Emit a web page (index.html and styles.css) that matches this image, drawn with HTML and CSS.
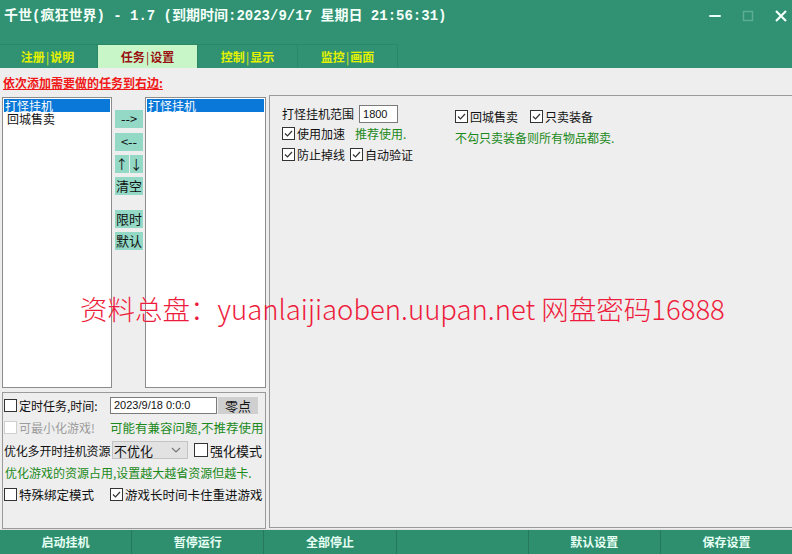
FILE: index.html
```html
<!DOCTYPE html>
<html lang="zh-CN">
<head>
    <meta charset="UTF-8">
    <title>千世(疯狂世界)</title>
    <link rel="stylesheet" href="styles.css">
</head>
<body>
    <div class="window">
        <div class="header">
            <div class="titlebar">
                <span class="title">千世(疯狂世界) - 1.7 (到期时间:2023/9/17 星期日 21:56:31)</span>
                <div class="win-btns">
                    <svg class="win-min" width="14" height="14" viewBox="0 0 14 14"><rect x="1" y="6" width="12" height="2" rx="1" fill="#eafff6"/></svg>
                    <svg class="win-max" width="14" height="14" viewBox="0 0 14 14"><rect x="2.5" y="2.5" width="9" height="9" fill="none" stroke="#5fae92" stroke-width="1.4"/></svg>
                    <svg class="win-close" width="14" height="14" viewBox="0 0 14 14"><path d="M2 2L12 12M12 2L2 12" stroke="#f4fffa" stroke-width="2.2"/></svg>
                </div>
            </div>
            <div class="tabs">
                <div class="tab">注册<i>|</i>说明</div>
                <div class="tab active">任务<i>|</i>设置</div>
                <div class="tab">控制<i>|</i>显示</div>
                <div class="tab">监控<i>|</i>画面</div>
            </div>
        </div>

        <div class="main">
            <div class="left">
                <div class="hint">依次添加需要做的任务到右边:</div>
                <div class="lists">
                    <div class="listbox list-src">
                        <div class="item sel">打怪挂机</div>
                        <div class="item">回城售卖</div>
                    </div>
                    <div class="move-btns">
                        <div class="mbtn b-add">--&gt;</div>
                        <div class="mbtn">&lt;--</div>
                        <div class="mbtn split"><span>↑</span><span>↓</span></div>
                        <div class="mbtn">清空</div>
                        <div class="mbtn b-limit">限时</div>
                        <div class="mbtn">默认</div>
                    </div>
                    <div class="listbox list-dst">
                        <div class="item sel">打怪挂机</div>
                    </div>
                </div>

                <div class="options">
                    <div class="orow r1">
                        <label class="ocell"><span class="cb"></span>定时任务,时间:</label>
                        <span class="field f-time">2023/9/18 0:0:0</span>
                        <span class="gbtn">零点</span>
                    </div>
                    <div class="orow r2">
                        <label class="ocell off"><span class="cb"></span>可最小化游戏!</label>
                        <span class="green">可能有兼容问题,不推荐使用</span>
                    </div>
                    <div class="orow r3">
                        <span class="olabel">优化多开时挂机资源</span>
                        <span class="select">不优化<svg width="10" height="6" viewBox="0 0 10 6"><path d="M1 1l4 4 4-4" fill="none" stroke="#777" stroke-width="1.2"/></svg></span>
                        <label class="strong-mode"><span class="cb"></span>强化模式</label>
                    </div>
                    <div class="orow r4">
                        <span class="green">优化游戏的资源占用,设置越大越省资源但越卡.</span>
                    </div>
                    <div class="orow r5">
                        <label class="ocell"><span class="cb"></span>特殊绑定模式</label>
                        <label><span class="cb on"><svg viewBox="0 0 11 11"><path d="M2 5.5l2.5 2.5 4.5-5" fill="none" stroke="#333" stroke-width="1.2"/></svg></span>游戏长时间卡住重进游戏</label>
                    </div>
                </div>
            </div>

            <div class="panel">
                <div class="pcol pcol-1">
                    <div class="prow">
                        <span>打怪挂机范围</span>
                        <span class="field f-range">1800</span>
                    </div>
                    <div class="prow">
                        <label><span class="cb on"><svg viewBox="0 0 11 11"><path d="M2 5.5l2.5 2.5 4.5-5" fill="none" stroke="#333" stroke-width="1.2"/></svg></span>使用加速</label>
                        <span class="green rec">推荐使用.</span>
                    </div>
                    <div class="prow">
                        <label><span class="cb on"><svg viewBox="0 0 11 11"><path d="M2 5.5l2.5 2.5 4.5-5" fill="none" stroke="#333" stroke-width="1.2"/></svg></span>防止掉线</label>
                        <label class="gap"><span class="cb on"><svg viewBox="0 0 11 11"><path d="M2 5.5l2.5 2.5 4.5-5" fill="none" stroke="#333" stroke-width="1.2"/></svg></span>自动验证</label>
                    </div>
                </div>
                <div class="pcol pcol-2">
                    <div class="prow">
                        <label><span class="cb on"><svg viewBox="0 0 11 11"><path d="M2 5.5l2.5 2.5 4.5-5" fill="none" stroke="#333" stroke-width="1.2"/></svg></span>回城售卖</label>
                        <label class="gap2"><span class="cb on"><svg viewBox="0 0 11 11"><path d="M2 5.5l2.5 2.5 4.5-5" fill="none" stroke="#333" stroke-width="1.2"/></svg></span>只卖装备</label>
                    </div>
                    <div class="prow">
                        <span class="green">不勾只卖装备则所有物品都卖.</span>
                    </div>
                </div>
            </div>

            <div class="watermark">资料总盘：yuanlaijiaoben.uupan.net 网盘密码16888</div>
        </div>

        <div class="footer">
            <div class="fbtn">启动挂机</div>
            <div class="fbtn">暂停运行</div>
            <div class="fbtn">全部停止</div>
            <div class="fbtn"></div>
            <div class="fbtn">默认设置</div>
            <div class="fbtn">保存设置</div>
        </div>
    </div>
</body>
</html>
```

FILE: styles.css
```css
body {
    margin: 0;
    padding: 0;
    background: #eeeeee;
    font-family: "Noto Sans CJK SC", "Noto Sans", sans-serif;
    font-size: 12px;
    color: #111;
}
.window {
    width: 792px;
    height: 554px;
    display: flex;
    flex-direction: column;
    overflow: hidden;
}

/* header: title row + tab strip */
.header {
    background: #309273;
    height: 68px;
    flex: none;
}
.titlebar {
    height: 44px;
    display: flex;
    align-items: flex-start;
}
.title {
    margin: 6px 0 0 4px;
    line-height: 20px;
    font-family: "Liberation Mono", "Noto Sans CJK SC", monospace;
    font-size: 14px;
    font-weight: bold;
    color: #f4fff9;
}
.win-btns {
    margin-left: auto;
    display: flex;
    gap: 19px;
    padding: 9px 4px 0 0;
}
.tabs {
    display: flex;
    height: 24px;
    width: 400px;
    margin-left: -2px;
    border-top: 1px solid #2a8868;
    box-sizing: border-box;
}
.tab {
    width: 100px;
    text-align: center;
    line-height: 23px;
    font-weight: bold;
    color: #e4f200;
    border-right: 1px solid #2a8868;
    box-sizing: border-box;
}
.tab i {
    font-style: normal;
    font-weight: normal;
    margin: 0 1px;
}
.tab.active {
    background: #c8f6c8;
    color: #9a1010;
}

/* main area */
.main {
    flex: 1;
    display: flex;
    position: relative;
}
.left {
    width: 264px;
    margin-left: 2px;
    display: flex;
    flex-direction: column;
}
.hint {
    margin: 7px 0 0 1px;
    line-height: 16px;
    height: 16px;
    color: #f01818;
    font-weight: bold;
    text-decoration: underline;
}
.lists {
    display: flex;
    margin-top: 6px;
    height: 291px;
}
.listbox {
    background: #fff;
    border: 1px solid #8c8c8c;
    box-sizing: border-box;
    padding: 1px;
}
.list-src {
    width: 110px;
}
.list-dst {
    width: 121px;
    margin-left: 2px;
}
.item {
    height: 13px;
    line-height: 13px;
    padding-left: 3px;
    white-space: nowrap;
}
.item.sel {
    background: #0a78d8;
    color: #fff;
    padding-left: 1px;
}
.move-btns {
    width: 28px;
    margin-left: 3px;
    display: flex;
    flex-direction: column;
    gap: 4px;
    padding-top: 13px;
}
.mbtn {
    height: 18px;
    line-height: 18px;
    background: #93d9c6;
    text-align: center;
    font-size: 13px;
}
.mbtn.b-add {
    margin-bottom: 1px;
}
.mbtn.b-limit {
    margin-top: 11px;
}
.mbtn.split {
    display: flex;
    gap: 1px;
    background: none;
}
.mbtn.split span {
    flex: 1;
    background: #93d9c6;
}

/* options box under the lists */
.options {
    margin-top: 4px;
    height: 137px;
    border: 1px solid #9a9a9a;
    box-sizing: border-box;
    padding: 1px 0 0 1px;
}
.orow {
    display: flex;
    align-items: center;
    white-space: nowrap;
}
.r1, .r2 { height: 22px; }
.r3 { height: 24px; }
.r4 { height: 20px; }
.r5 { height: 24px; }
label {
    display: inline-flex;
    align-items: center;
}
.ocell {
    width: 106px;
}
.ocell.off {
    color: #9c9c9c;
}
.ocell.off .cb {
    border-color: #cfcfcf;
}
.olabel {
    width: 106px;
    letter-spacing: -0.2px;
}
.cb {
    width: 11px;
    height: 11px;
    border: 1px solid #333;
    background: #fff;
    margin-right: 2px;
    flex: none;
    display: inline-flex;
}
.cb svg {
    width: 11px;
    height: 11px;
}
.field {
    display: inline-block;
    background: #fff;
    border: 1px solid #7a7a7a;
    box-sizing: border-box;
    font-family: "Liberation Sans", sans-serif;
    font-size: 11px;
    line-height: 15px;
    padding-left: 3px;
}
.f-time {
    width: 107px;
    height: 17px;
}
.gbtn {
    width: 40px;
    height: 17px;
    line-height: 17px;
    margin-left: 1px;
    background: #cfcfcf;
    text-align: center;
    font-size: 13px;
}
.green {
    color: #1b8a1b;
}
.r2 .green {
    font-size: 12.5px;
}
.select {
    width: 76px;
    height: 18px;
    margin-left: 2px;
    box-sizing: border-box;
    background: #e2e2e2;
    border: 1px solid #c4c4c4;
    display: inline-flex;
    align-items: center;
    justify-content: space-between;
    padding: 0 6px 0 1px;
    font-size: 13px;
}
.strong-mode {
    margin-left: 6px;
    font-size: 13px;
}
.strong-mode .cb {
    width: 12px;
    height: 12px;
}
.r4 .green {
    padding-left: 1px;
}
.r5 {
    font-size: 12.5px;
}

/* settings panel on the right */
.panel {
    flex: 1;
    margin: 27px 0 1px 3px;
    border: 1px solid #9a9a9a;
    border-right: none;
    display: flex;
    padding: 8px 0 0 12px;
}
.pcol-1 {
    width: 173px;
}
.pcol-2 {
    padding-top: 2px;
}
.prow {
    display: flex;
    align-items: center;
    height: 20px;
    white-space: nowrap;
}
.pcol-1 .prow:first-child {
    height: 19px;
}
.pcol-1 .prow + .prow {
    height: 21px;
}
.pcol-2 .prow:first-child {
    height: 21px;
}
.f-range {
    width: 39px;
    height: 18px;
    margin-left: 5px;
    line-height: 16px;
}
.rec {
    margin-left: 10px;
}
.gap {
    margin-left: 5px;
}
.gap2 {
    margin-left: 12px;
}

/* link banner drawn across the page */
.watermark {
    position: absolute;
    left: 80px;
    top: 222px;
    font-size: 27.5px;
    line-height: 36px;
    color: #ee1c3c;
    white-space: nowrap;
    font-weight: 300;
}

/* bottom action bar */
.footer {
    height: 24px;
    flex: none;
    display: flex;
    background: #2e8f6f;
    border-top: 1px solid #e0e0e0;
}
.fbtn {
    flex: 1;
    text-align: center;
    line-height: 24px;
    font-weight: bold;
    color: #e6fff4;
    border-right: 1px solid #25785c;
    box-sizing: border-box;
}
.fbtn:last-child {
    border-right: none;
}
```
